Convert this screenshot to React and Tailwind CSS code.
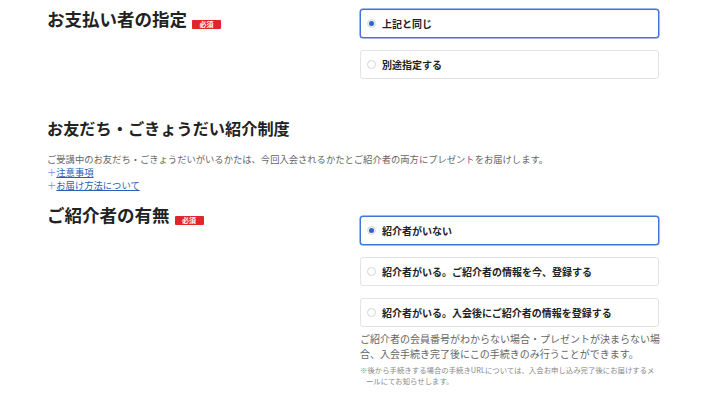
const font = { fontFamily: '"Noto Sans CJK JP", "Noto Sans", sans-serif' };

const Badge = () => (
  <span className="inline-flex h-[9px] w-[29px] items-center justify-center rounded-[1px] bg-[#e0262c] text-[7px] font-bold leading-none text-white">
    必須
  </span>
);

const Option = ({ label, selected }) => (
  <div
    className={`flex h-[29px] items-center gap-[6px] rounded-[3px] border bg-white pl-[6px] ${
      selected ? 'border-[#3f75d9] shadow-[0_0_0_0.5px_#3f75d9]' : 'border-[#e3e3e3]'
    }`}
  >
    {selected ? (
      <span className="flex h-[9px] w-[9px] items-center justify-center rounded-full border border-[#dcdcdc] bg-[#eeeeee]">
        <span className="h-[5px] w-[5px] rounded-full bg-[#2f63cf]"></span>
      </span>
    ) : (
      <span className="h-[9px] w-[9px] rounded-full border border-[#d6d6d6] bg-white"></span>
    )}
    <span className="text-[10px] font-bold leading-none text-[#222]">{label}</span>
  </div>
);

export default function App() {
  return (
    <div className="min-h-[400px] w-[720px] bg-white pl-[47px] pr-[61px] text-[#222]" style={font}>
      <div className="flex pt-[5px]">
        <div className="flex flex-1 items-center gap-[5px] self-start">
          <h2 className="text-[17.5px] font-bold leading-[24px]">お支払い者の指定</h2>
          <span className="mt-[3px]"><Badge /></span>
        </div>
        <div className="mt-[4px] flex w-[299px] flex-col gap-[12px]">
          <Option label="上記と同じ" selected />
          <Option label="別途指定する" />
        </div>
      </div>

      <h2 className="mt-[38px] text-[16.2px] font-bold leading-[22px]">お友だち・ごきょうだい紹介制度</h2>
      <p className="mt-[14px] text-[9.3px] leading-[13px] text-[#666]">
        ご受講中のお友だち・ごきょうだいがいるかたは、今回入会されるかたとご紹介者の両方にプレゼントをお届けします。
      </p>
      <ul className="text-[9.3px] leading-[13px]">
        <li>
          <span className="text-[#6f93d4]">＋</span>
          <a href="#" className="text-[#2d5fb5] underline">注意事項</a>
        </li>
        <li>
          <span className="text-[#6f93d4]">＋</span>
          <a href="#" className="text-[#2d5fb5] underline">お届け方法について</a>
        </li>
      </ul>

      <div className="mt-[10px] flex">
        <div className="flex flex-1 items-center gap-[5px] self-start">
          <h2 className="text-[17.5px] font-bold leading-[24px]">ご紹介者の有無</h2>
          <span className="mt-[2px]"><Badge /></span>
        </div>
        <div className="mt-[14px] w-[299px]">
          <div className="flex flex-col gap-[12px]">
            <Option label="紹介者がいない" selected />
            <Option label="紹介者がいる。ご紹介者の情報を今、登録する" />
            <Option label="紹介者がいる。入会後にご紹介者の情報を登録する" />
          </div>
          <p className="mt-[4px] text-[10px] leading-[15px] text-[#666]">
            <span className="block whitespace-nowrap">ご紹介者の会員番号がわからない場合・プレゼントが決まらない場</span>
            <span className="block whitespace-nowrap">合、入会手続き完了後にこの手続きのみ行うことができます。</span>
          </p>
          <p className="mt-[3px] text-[7.4px] leading-[11px] text-[#888]">
            <span className="block whitespace-nowrap">※後から手続きする場合の手続きURLについては、入会お申し込み完了後にお届けするメ</span>
            <span className="block whitespace-nowrap pl-[0.8em]">ールにてお知らせします。</span>
          </p>
        </div>
      </div>
    </div>
  );
}
